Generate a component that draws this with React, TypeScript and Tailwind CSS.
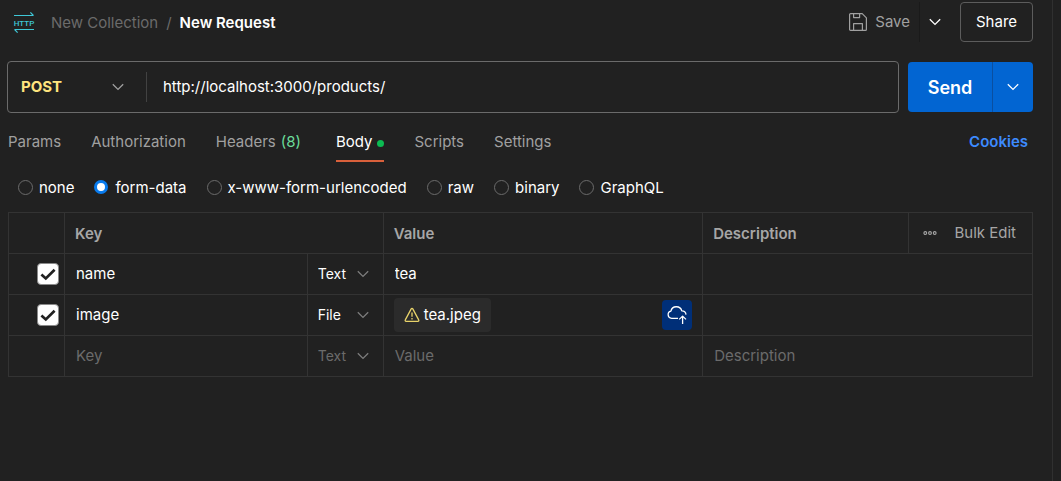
import { useState } from "react";
import type { ReactNode } from "react";

function Chevron({ className = "" }: { className?: string }) {
  return (
    <svg
      viewBox="0 0 12 12"
      className={`pointer-events-none size-3 shrink-0 ${className}`}
      fill="none"
      stroke="currentColor"
      strokeWidth="1.3"
      aria-hidden="true"
    >
      <path d="M0.8 3.2 6 8.4l5.2-5.2" />
    </svg>
  );
}

function HttpIcon() {
  return (
    <svg viewBox="0 0 22 22" className="size-[22px] shrink-0 overflow-visible" fill="none" stroke="#3fc7d6" strokeWidth="1.2" aria-hidden="true">
      <path d="M1 3.5h19.6M17.4 0.4l3 3.1" />
      <path d="M21 17.5H1.4M4.6 20.6l-3-3.1" />
      <text x="11" y="13.5" textAnchor="middle" fontSize="8" fill="#3fc7d6" stroke="none" className="font-['Roboto',sans-serif] font-medium">
        HTTP
      </text>
    </svg>
  );
}

function SaveIcon() {
  return (
    <svg viewBox="0 0 18 18" className="size-[18px] shrink-0" fill="none" stroke="currentColor" strokeWidth="1.2" strokeLinejoin="round" aria-hidden="true">
      <path d="M1.6 0.6h11.6l4.2 4.2v11.6a1 1 0 0 1-1 1H1.6a1 1 0 0 1-1-1V1.6a1 1 0 0 1 1-1Z" />
      <path d="M4.6 0.8v3.8h6V0.8M4.6 17.2v-6.6h8.8v6.6" />
    </svg>
  );
}

function WarningIcon() {
  return (
    <svg viewBox="0 0 16 16" className="size-4 shrink-0" fill="none" stroke="#e8d36a" strokeWidth="1.3" strokeLinejoin="round" aria-hidden="true">
      <path d="M7.2 1.9a0.9 0.9 0 0 1 1.6 0l5.9 11a0.9 0.9 0 0 1-0.8 1.4H2.1a0.9 0.9 0 0 1-0.8-1.4Z" />
      <path d="M8 5.4v4.4M8 11v1.4" />
    </svg>
  );
}

function CloudUploadIcon() {
  return (
    <svg viewBox="0 0 20 20" className="size-5 shrink-0" fill="none" stroke="#fff" strokeWidth="1.3" strokeLinejoin="round" aria-hidden="true">
      <path d="M11 13.3H4.6a3.6 3.6 0 0 1-0.7-7.1 5.6 5.6 0 0 1 10.9-0.3 3.9 3.9 0 0 1 4.2 3.7" />
      <path d="M15.6 19v-7.6M12.2 14.4l3.4-3.3 3.4 3.3" />
    </svg>
  );
}

function MoreIcon() {
  return (
    <svg viewBox="0 0 14 6" className="h-1.5 w-3.5" fill="none" stroke="currentColor" strokeWidth="1.1" aria-hidden="true">
      <circle cx="2.3" cy="3" r="1.4" />
      <circle cx="7" cy="3" r="1.4" />
      <circle cx="11.7" cy="3" r="1.4" />
    </svg>
  );
}

function Tab({ active = false, children }: { active?: boolean; children: ReactNode }) {
  return (
    <button
      type="button"
      role="tab"
      aria-selected={active}
      className={
        active
          ? "ml-[5px] flex h-10 items-center gap-[5px] border-b-2 border-[#d9603b] pt-0.5 text-white"
          : "flex h-10 items-center gap-[5px] border-b-2 border-transparent pt-0.5 text-[#a0a0a0]"
      }
    >
      {children}
    </button>
  );
}

const bodyTypes = ["none", "form-data", "x-www-form-urlencoded", "raw", "binary", "GraphQL"];

const cell = "border border-[#333333] p-0";
const heading = "pt-0.5 pl-2.5 font-semibold";
const field = "block w-full min-w-0 bg-transparent pl-[11px] text-white outline-none placeholder:text-[#6b6b6b]";

function Enabled({ name }: { name: string }) {
  const [on, setOn] = useState(true);
  return (
    <label className="ml-7 grid size-[22px] place-items-center">
      <input
        type="checkbox"
        aria-label={`Include ${name}`}
        checked={on}
        onChange={() => setOn(!on)}
        className="col-start-1 row-start-1 size-[22px] appearance-none rounded border border-[#8a8a8a] checked:bg-white"
      />
      {on && (
        <svg viewBox="0 0 16 16" className="pointer-events-none col-start-1 row-start-1 size-4" fill="none" stroke="#212121" strokeWidth="2.7" aria-hidden="true">
          <path d="M1.4 8.4 5.8 12.4 14.6 3.8" />
        </svg>
      )}
    </label>
  );
}

function TypeSelect({ value, label, muted = false }: { value: string; label: string; muted?: boolean }) {
  return (
    <div className="grid items-center">
      <select
        aria-label={label}
        defaultValue={value}
        className={
          muted
            ? "col-start-1 row-start-1 w-full appearance-none bg-transparent pl-2.5 text-sm text-[#6b6b6b] outline-none"
            : "col-start-1 row-start-1 w-full appearance-none bg-transparent pl-2.5 text-sm text-white outline-none"
        }
      >
        <option>Text</option>
        <option>File</option>
      </select>
      <Chevron className="col-start-1 row-start-1 mr-3.5 justify-self-end text-[#7d7d7d]" />
    </div>
  );
}

export default function App() {
  const [bodyType, setBodyType] = useState("form-data");

  return (
    <div className="flex min-h-screen bg-[#212121] font-['Inter',sans-serif] text-[15px] leading-5 text-white">
      <main className="min-w-0 flex-1 border-r border-[#303030] pt-0.5 pr-[19px] pl-2">
        <header className="flex h-10 items-center">
          <nav aria-label="Breadcrumb" className="flex flex-1 items-center pt-0.5 pl-[5px]">
            <HttpIcon />
            <a href="#collection" className="ml-4 text-[#6b6b6b]">New Collection</a>
            <span className="mx-2 text-[#6b6b6b]">/</span>
            <span className="font-semibold">New Request</span>
          </nav>
          <button type="button" className="flex h-full items-center gap-2 border-r border-[#1a1a1a] pr-[9px] text-[#a0a0a0]">
            <SaveIcon />
            Save
          </button>
          <button type="button" aria-label="Save options" className="grid h-full w-[30px] place-items-center">
            <Chevron />
          </button>
          <button type="button" className="ml-2.5 h-full w-[73px] rounded border border-[#5c5c5c]">
            Share
          </button>
        </header>

        <form className="mt-[19px] -ml-px flex items-center gap-[9px]" onSubmit={(e) => e.preventDefault()}>
          <div className="flex h-[52px] min-w-0 flex-1 items-center rounded border border-[#6b6b6b]">
            <div className="grid w-[139px] items-center border-r border-[#424242]">
              <select
                aria-label="Method"
                defaultValue="POST"
                className="col-start-1 row-start-1 h-[30px] w-full appearance-none bg-transparent pl-[13px] font-bold text-[#ffe47e] outline-none"
              >
                <option>GET</option>
                <option>POST</option>
                <option>PUT</option>
                <option>DELETE</option>
              </select>
              <Chevron className="col-start-1 row-start-1 mr-[22px] justify-self-end text-[#a0a0a0]" />
            </div>
            <input
              type="text"
              aria-label="Request URL"
              defaultValue="http://localhost:3000/products/"
              className="h-full min-w-0 flex-1 bg-transparent pb-0.5 pl-4 outline-none"
            />
          </div>
          <div className="flex h-[50px] overflow-hidden rounded bg-[#0265d2]">
            <button type="submit" className="w-[84px] pt-0.5 text-lg font-semibold">Send</button>
            <button type="button" aria-label="Send options" className="grid w-[41px] place-items-center border-l border-[#0a4fa0]">
              <Chevron />
            </button>
          </div>
        </form>

        <div className="mt-[9px] flex items-center justify-between pr-[5px]">
          <div role="tablist" className="flex gap-[30px]">
            <Tab>Params</Tab>
            <Tab>Authorization</Tab>
            <Tab>
              Headers <span className="text-[#6bdd9a]">(8)</span>
            </Tab>
            <Tab active>
              Body <span className="mt-0.5 size-[7px] rounded-full bg-[#0cbb52]" />
            </Tab>
            <Tab>Scripts</Tab>
            <Tab>Settings</Tab>
          </div>
          <a href="#cookies" className="font-semibold text-[#3d8bff]">Cookies</a>
        </div>

        <fieldset aria-label="Body type" className="mt-4 flex h-5 items-center gap-5 pl-2.5">
          {bodyTypes.map((type) => (
            <label key={type} className="flex items-center gap-1.5">
              <input
                type="radio"
                name="body-type"
                value={type}
                checked={bodyType === type}
                onChange={() => setBodyType(type)}
                className="mb-0.5 size-[15px] appearance-none rounded-full border border-[#6b6b6b] checked:mr-px checked:size-3.5 checked:border-[3px] checked:border-[#097bed] checked:bg-white"
              />
              {type}
            </label>
          ))}
        </fieldset>

        <table className="mt-[14px] w-full table-fixed border-collapse text-left">
          <colgroup>
            <col className="w-14" />
            <col className="w-[23.7%]" />
            <col className="w-[76px]" />
            <col className="w-[31.2%]" />
            <col />
            <col className="w-[124px]" />
          </colgroup>
          <thead className="text-[#a6a6a6]">
            <tr className="h-[41px]">
              <th className={cell} aria-label="Enabled" />
              <th className={cell} colSpan={2}>
                <div className={heading}>Key</div>
              </th>
              <th className={cell}>
                <div className={heading}>Value</div>
              </th>
              <th className={cell}>
                <div className={heading}>Description</div>
              </th>
              <th className={cell}>
                <div className="flex items-center justify-between pr-4 pl-3.5 font-normal">
                  <button type="button" aria-label="More options">
                    <MoreIcon />
                  </button>
                  <button type="button">Bulk Edit</button>
                </div>
              </th>
            </tr>
          </thead>
          <tbody>
            <tr className="h-[41px]">
              <td className={cell}><Enabled name="name" /></td>
              <td className={cell}><input aria-label="Key 1" defaultValue="name" className={field} /></td>
              <td className={cell}><TypeSelect label="Type 1" value="Text" /></td>
              <td className={cell}><input aria-label="Value 1" defaultValue="tea" className={field} /></td>
              <td className={cell} colSpan={2}><input aria-label="Description 1" className={field} /></td>
            </tr>
            <tr className="h-[41px]">
              <td className={cell}><Enabled name="image" /></td>
              <td className={cell}><input aria-label="Key 2" defaultValue="image" className={field} /></td>
              <td className={cell}><TypeSelect label="Type 2" value="File" /></td>
              <td className={cell}>
                <div className="flex items-center justify-between pr-2.5 pl-2.5">
                  <span className="flex h-[34px] items-center gap-1 rounded bg-[#2b2b2b] px-2.5">
                    <WarningIcon />
                    tea.jpeg
                  </span>
                  <button type="button" aria-label="Upload file" className="grid size-[30px] place-items-center rounded bg-[#002f78]">
                    <CloudUploadIcon />
                  </button>
                </div>
              </td>
              <td className={cell} colSpan={2}><input aria-label="Description 2" className={field} /></td>
            </tr>
            <tr className="h-[41px]">
              <td className={cell} />
              <td className={cell}><input aria-label="New key" placeholder="Key" className={field} /></td>
              <td className={cell}><TypeSelect label="New type" value="Text" muted /></td>
              <td className={cell}><input aria-label="New value" placeholder="Value" className={field} /></td>
              <td className={cell} colSpan={2}><input aria-label="New description" placeholder="Description" className={field} /></td>
            </tr>
          </tbody>
        </table>
      </main>
      <aside className="w-2 shrink-0" />
    </div>
  );
}
